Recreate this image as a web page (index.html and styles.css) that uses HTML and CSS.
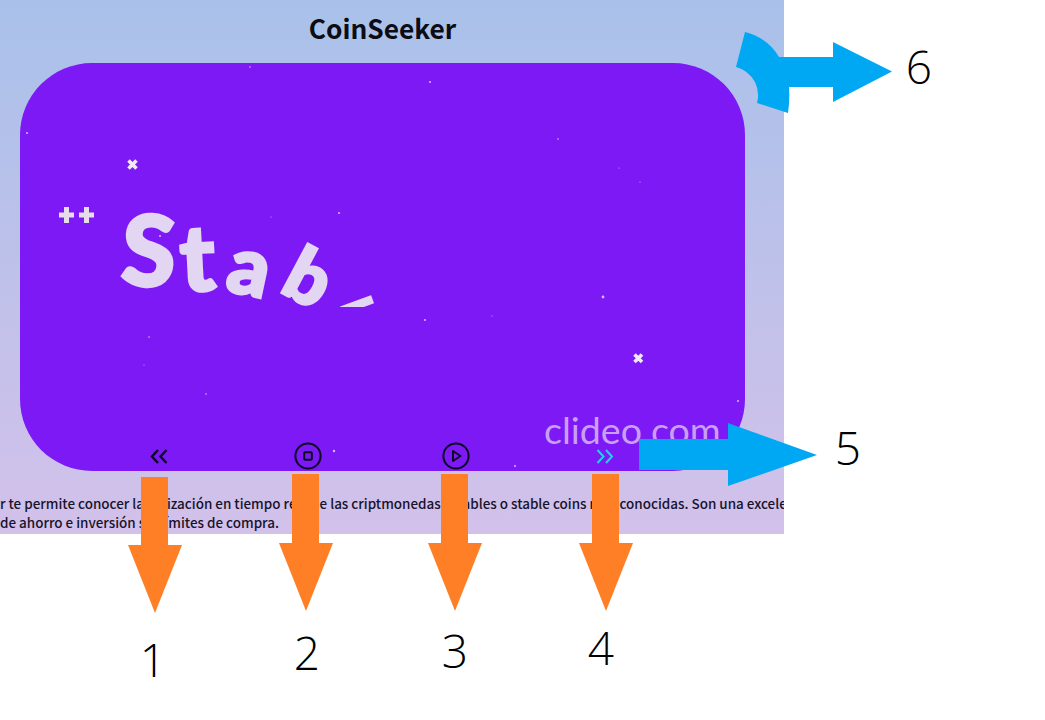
FILE: index.html
```html
<!DOCTYPE html>
<html lang="es">
<head>
    <meta charset="UTF-8">
    <meta name="viewport" content="width=device-width, initial-scale=1.0">
    <title>CoinSeeker</title>
    <link rel="stylesheet" href="styles.css">
</head>
<body>
    <div class="page">
        <div class="frame">
            <h1>CoinSeeker</h1>

            <div class="video">
                <div class="letters">
                    <span class="letter letter-s">S</span>
                    <span class="letter letter-t">t</span>
                    <span class="letter letter-a">a</span>
                    <div class="letters-cut">
                        <span class="letter letter-b">b</span>
                        <span class="letter letter-l">l</span>
                    </div>
                </div>
                <svg class="sparkles" viewBox="20 63 725 408">
                    <g stroke="#f1e9f6" stroke-width="3.6" fill="none">
                        <path d="M128.500 160.500l8 8M136.500 160.500l-8 8"/>
                        <path d="M634.500 354.500l7.500 7.500M642 354.500l-7.500 7.500"/>
                        <path d="M59 215h15M66.500 207v16M79 215h15M86.500 207v16" stroke="#e6dcea" stroke-width="5"/>
                    </g>
                    <g fill="#d9b8f8">
                        <circle cx="250" cy="67" r="0.800"/>
                        <circle cx="430" cy="82" r="1"/>
                        <circle cx="558" cy="139" r="0.800"/>
                        <circle cx="619" cy="168" r="0.600"/>
                        <circle cx="640" cy="182" r="0.600"/>
                        <circle cx="339" cy="213" r="1"/>
                        <circle cx="271" cy="217" r="0.600"/>
                        <circle cx="27" cy="133" r="1"/>
                        <circle cx="160" cy="236" r="1"/>
                        <circle cx="603" cy="297" r="1.400"/>
                        <circle cx="425" cy="320" r="1"/>
                        <circle cx="492" cy="316" r="0.600"/>
                        <circle cx="149" cy="337" r="0.800"/>
                        <circle cx="144" cy="365" r="0.600"/>
                        <circle cx="206" cy="394" r="0.800"/>
                        <circle cx="334" cy="451" r="1.200"/>
                        <circle cx="515" cy="466" r="1"/>
                        <circle cx="738" cy="401" r="1"/>
                    </g>
                </svg>
                <span class="watermark">clideo.com</span>
            </div>

            <div class="controls">
                <svg class="icon" viewBox="0 0 18 15">
                    <path d="M8 1L2 7.500 8 14M16.500 1l-6 6.500 6 6.500" stroke="#0c0820" stroke-width="2.400" fill="none"/>
                </svg>
                <svg class="icon-round" viewBox="0 0 28 28">
                    <circle cx="14" cy="14" r="12.600" stroke="#0c0820" stroke-width="2" fill="none"/>
                    <rect x="10.200" y="10.200" width="7.600" height="7.600" rx="1" stroke="#0c0820" stroke-width="2" fill="none"/>
                </svg>
                <svg class="icon-round" viewBox="0 0 28 28">
                    <circle cx="14" cy="14" r="12.600" stroke="#0c0820" stroke-width="2" fill="none"/>
                    <path d="M11 9l7.500 5-7.500 5z" stroke="#0c0820" stroke-width="2" stroke-linejoin="round" fill="none"/>
                </svg>
                <svg class="icon" viewBox="0 0 18 15">
                    <path d="M1.500 1l6 6.500-6 6.500M10 1l6 6.500-6 6.500" stroke="#1fd3f2" stroke-width="2" fill="none"/>
                </svg>
            </div>

            <div class="description">
                <p>r te permite conocer la cotización en tiempo real de las criptmonedas estables o stable coins más conocidas. Son una excelente</p>
                <p>de ahorro e inversión sin límites de compra.</p>
            </div>
        </div>

        <svg class="callouts" viewBox="0 0 1045 720">
            <g fill="#ff7f27">
                <path d="M141 477h27v68h14l-27 68-27-68h13z"/>
                <path d="M292 474h27v69h14l-27 68-27-68h13z"/>
                <path d="M441 474h27v69h14l-27 68-27-68h13z"/>
                <path d="M592 474h27v69h14l-27 68-27-68h13z"/>
            </g>
            <g fill="#00a8f3">
                <path d="M639 439h89v-16l89 32-89 31v-16h-89z"/>
                <path d="M745 32Q768 38 779 57h54V42l59 29.500-59 30.500V87h-44Q790 100 788 113l-31-10Q760 92 755 82 748 70 736 67z"/>
            </g>
            <g class="callout-numbers">
                <text x="153" y="677" text-anchor="middle">1</text>
                <text x="307" y="670" text-anchor="middle">2</text>
                <text x="455" y="668" text-anchor="middle">3</text>
                <text x="601" y="665" text-anchor="middle">4</text>
                <text x="848" y="465" text-anchor="middle">5</text>
                <text x="919" y="84" text-anchor="middle">6</text>
            </g>
        </svg>
    </div>
</body>
</html>
```

FILE: styles.css
```css
body {
    margin: 0;
    background-color: #ffffff;
    font-family: "Noto Sans CJK SC", "Noto Sans", sans-serif;
}
.page {
    position: relative;
    width: 1045px;
    height: 720px;
    overflow: hidden;
}
.frame {
    width: 784px;
    height: 534px;
    overflow: hidden;
    background: linear-gradient(180deg, #a9c1ea 0%, #d3c1ea 100%);
}
h1 {
    margin: 0;
    height: 63px;
    padding: 9px 19px 0 0;
    box-sizing: border-box;
    text-align: center;
    font-size: 26.300px;
    line-height: 38px;
    font-weight: 700;
    color: #0c0c14;
}
.video {
    position: relative;
    width: 725px;
    height: 408px;
    margin-left: 20px;
    border-radius: 72px;
    background-color: #7c19f5;
    overflow: hidden;
}
.letters {
    position: absolute;
    left: 0;
    top: 0;
    font-family: Lato, sans-serif;
    font-weight: 900;
    color: #e3d6f3;
    -webkit-text-stroke: 3px #e3d6f3;
    paint-order: stroke fill;
}
.letters-cut {
    position: absolute;
    left: 240px;
    top: 170px;
    width: 160px;
    height: 74px;
    overflow: hidden;
}
.letter {
    position: absolute;
    line-height: 1;
}
.letter-s {
    left: 102px;
    top: 136px;
    font-size: 98px;
    transform: rotate(3deg);
}
.letter-t {
    left: 160px;
    top: 147px;
    font-size: 92px;
    transform: rotate(-3deg);
}
.letter-a {
    left: 210px;
    top: 161px;
    font-size: 80px;
    transform: rotate(12deg);
}
.letter-b {
    left: 29px;
    top: 6px;
    font-size: 74px;
    transform: rotate(28deg);
}
.letter-l {
    left: 92px;
    top: 52px;
    font-size: 40px;
    transform: rotate(70deg);
}
.sparkles {
    position: absolute;
    left: 0;
    top: 0;
    width: 725px;
    height: 408px;
}
.watermark {
    position: absolute;
    left: 524px;
    top: 345px;
    font-family: Lato, sans-serif;
    font-weight: 400;
    font-size: 37.600px;
    line-height: 44px;
    color: #c99ff3;
}
.controls {
    position: relative;
    display: grid;
    grid-template-columns: repeat(4, 148.500px);
    justify-items: center;
    align-items: center;
    height: 28px;
    margin: -29px 0 0 85px;
}
.icon {
    width: 18px;
    height: 15px;
}
.icon-round {
    width: 28px;
    height: 28px;
}
.description {
    margin-top: 24px;
    font-size: 13.450px;
    line-height: 19px;
    font-weight: 500;
    color: #17132b;
    white-space: nowrap;
}
.description p {
    margin: 0;
}
.callouts {
    position: absolute;
    left: 0;
    top: 0;
    width: 1045px;
    height: 720px;
}
.callout-numbers {
    font-family: "Open Sans", sans-serif;
    font-weight: 300;
    font-size: 46px;
    fill: #000000;
}
```
